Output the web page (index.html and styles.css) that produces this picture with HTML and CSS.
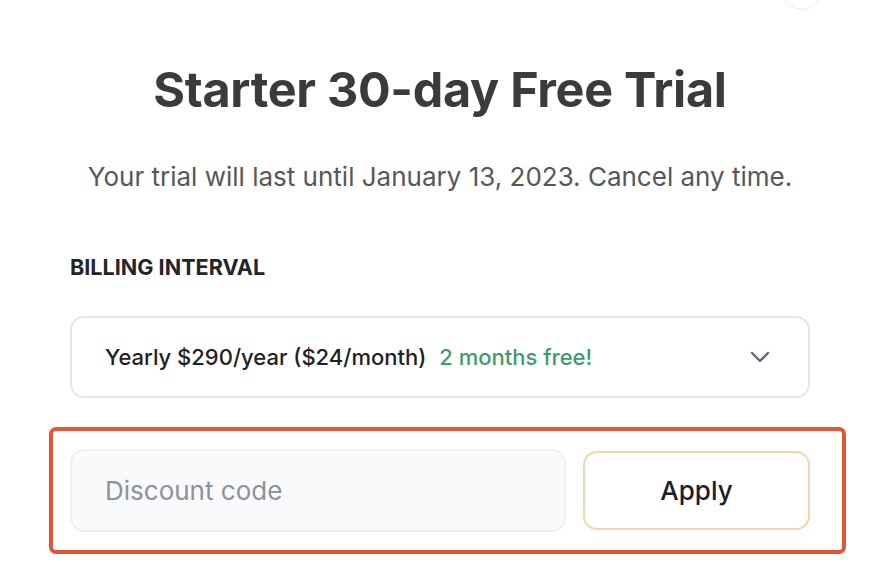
FILE: index.html
```html
<!DOCTYPE html>
<html>
<head>
<meta charset="utf-8">
<link rel="stylesheet" href="styles.css">
</head>
<body>
<div class="page">
  <div class="close"></div>
  <h1 class="title">Starter 30-day Free Trial</h1>
  <p class="subtitle">Your trial will last until January 13, 2023. Cancel any time.</p>
  <div class="label">BILLING INTERVAL</div>
  <div class="select">
    <span class="opt">Yearly $290/year ($24/month)</span>
    <span class="free">2 months free!</span>
    <svg class="chev" width="20" height="12" viewBox="0 0 20 12"><path d="M2 2 L10 10 L18 2" fill="none" stroke="#5f6577" stroke-width="2.4" stroke-linecap="round" stroke-linejoin="round"/></svg>
  </div>
  <div class="discount">
    <div class="input">Discount code</div>
    <div class="apply">Apply</div>
  </div>
</div>
</body>
</html>
```
FILE: styles.css
```css
html, body {
  margin: 0;
  padding: 0;
  background: #ffffff;
}
body {
  font-family: Inter, "Noto Sans", sans-serif;
  width: 880px;
  height: 576px;
  overflow: hidden;
}
.page {
  position: relative;
  width: 880px;
  height: 576px;
  padding-top: 62px;
  box-sizing: border-box;
}
.close {
  position: absolute;
  left: 782px;
  top: -30px;
  width: 38px;
  height: 38px;
  border: 1.5px solid #ececee;
  border-radius: 50%;
}
.title {
  margin: 0;
  text-align: center;
  font-size: 48.5px;
  line-height: 56px;
  font-weight: 700;
  color: #3a3b3d;
  letter-spacing: -0.3px;
}
.subtitle {
  margin: 43px 0 0;
  text-align: center;
  font-size: 26px;
  line-height: 32px;
  color: #56575b;
}
.label {
  margin: 62px 0 0 70px;
  font-size: 21.6px;
  line-height: 24px;
  font-weight: 700;
  color: #232529;
}
.select {
  margin: 37px 0 0 70px;
  width: 740px;
  height: 82px;
  box-sizing: border-box;
  border: 2px solid #e5e7eb;
  border-radius: 14px;
  display: flex;
  align-items: center;
  padding: 0 38px 0 33px;
  font-size: 22px;
  color: #1f2124;
}
.opt {
  font-weight: 500;
}
.free {
  margin-left: 13px;
  color: #3f9a70;
  font-weight: 500;
}
.chev {
  margin-left: auto;
}
.discount {
  margin: 29px 0 0 49px;
  width: 797px;
  height: 127px;
  box-sizing: border-box;
  border: 4px solid #e15634;
  border-radius: 7px;
  display: flex;
  align-items: center;
  padding: 0 32px 0 17px;
  gap: 17px;
}
.input {
  width: 496px;
  height: 83px;
  box-sizing: border-box;
  background: #f9fafb;
  border: 2px solid #eef0f2;
  border-radius: 14px;
  display: flex;
  align-items: center;
  padding-left: 33px;
  font-size: 26px;
  color: #8d929b;
}
.apply {
  width: 227px;
  height: 79px;
  box-sizing: border-box;
  border: 2px solid #f0d9a8;
  border-radius: 14px;
  display: flex;
  align-items: center;
  justify-content: center;
  font-size: 26px;
  font-weight: 500;
  color: #1f1a2e;
}
```
